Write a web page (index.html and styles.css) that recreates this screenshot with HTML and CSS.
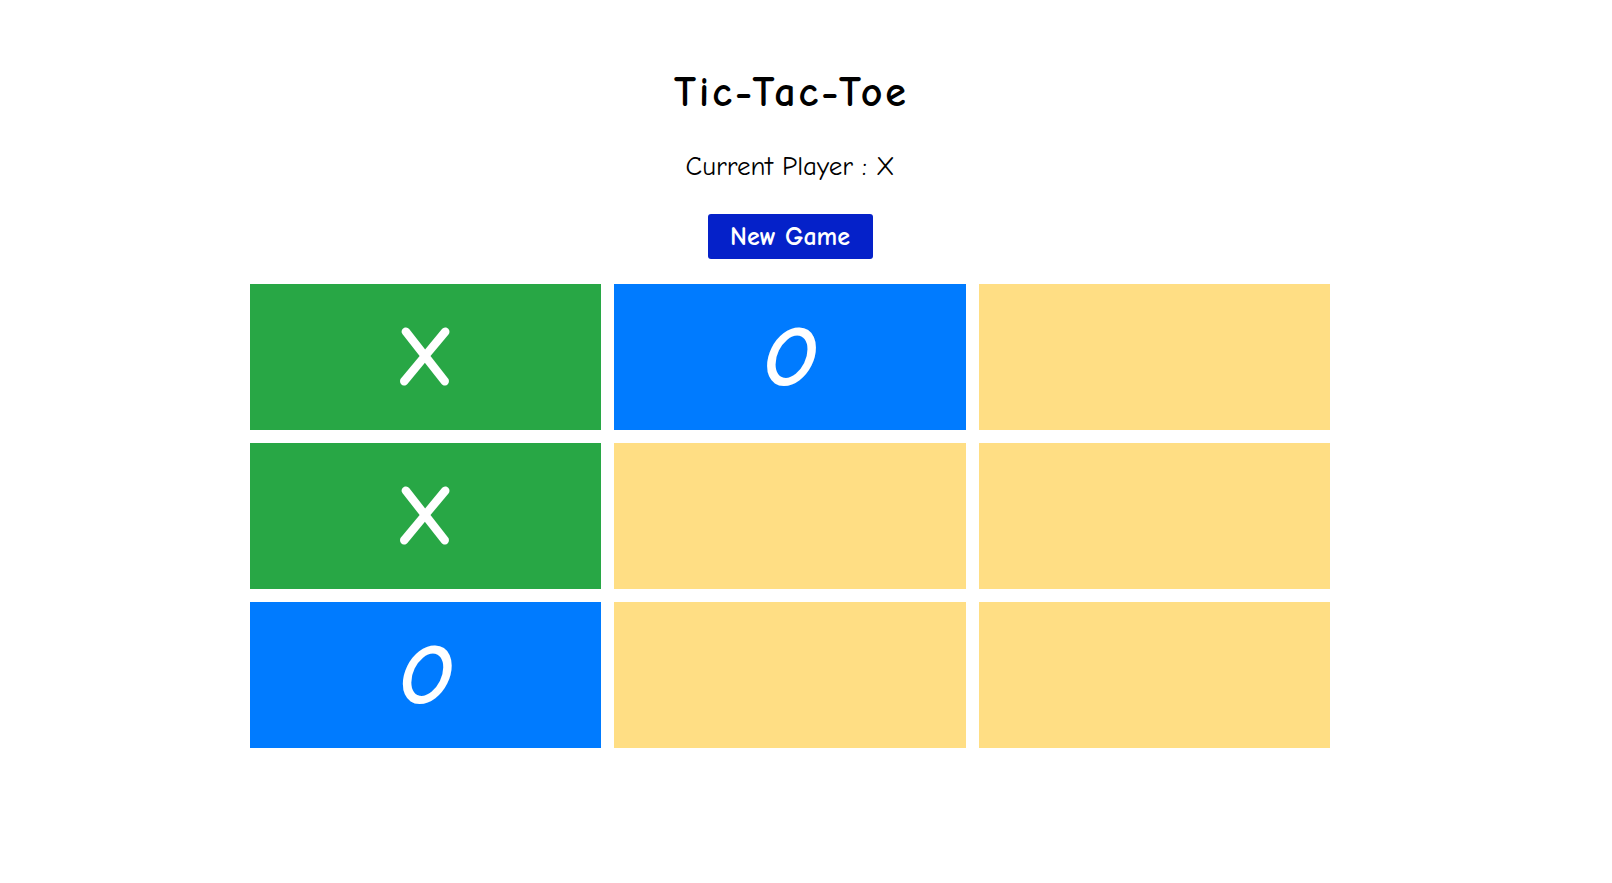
FILE: index.html
```html
<!DOCTYPE html>
<html>
<head>
<meta charset="utf-8">
<link rel="stylesheet" href="styles.css">
</head>
<body>
<main class="game">
  <h1 class="title">Tic-Tac-Toe</h1>
  <p class="status">Current Player : X</p>
  <button class="new-game">New Game</button>
  <div class="board">
    <div class="cell cell-x">X</div>
    <div class="cell cell-o">O</div>
    <div class="cell"></div>
    <div class="cell cell-x">X</div>
    <div class="cell"></div>
    <div class="cell"></div>
    <div class="cell cell-o">O</div>
    <div class="cell"></div>
    <div class="cell"></div>
  </div>
</main>
</body>
</html>
```

FILE: styles.css
```css
body {
  margin: 8px;
  width: 1564px;
  font-family: "Comic Sans MS", "Comic Neue", Lato, "DejaVu Sans", sans-serif;
  color: #000;
  background: #fff;
}
.game {
  display: flex;
  flex-direction: column;
  align-items: center;
}
.title {
  margin: 61px 0 0;
  font-size: 42px;
  line-height: 48px;
  font-weight: 700;
  letter-spacing: 3px;
  padding-left: 3px;
}
.status {
  margin: 34px 0 0;
  font-size: 27px;
  line-height: 32px;
}
.new-game {
  margin-top: 31px;
  width: 165px;
  height: 45px;
  border: none;
  border-radius: 3px;
  background: #0521c9;
  color: #fff;
  font-family: inherit;
  font-size: 26px;
  font-weight: 700;
  padding: 0;
}
.board {
  margin-top: 25px;
  width: 1080px;
  display: grid;
  grid-template-columns: repeat(3, 1fr);
  grid-auto-rows: 146px;
  gap: 13px;
}
.cell {
  background: #ffde84;
  color: #fff;
  font-size: 84px;
  font-weight: 700;
  display: flex;
  align-items: center;
  justify-content: center;
}
.cell-x { background: #28a745; }
.cell-o { background: #007bff; font-style: italic; }
```
